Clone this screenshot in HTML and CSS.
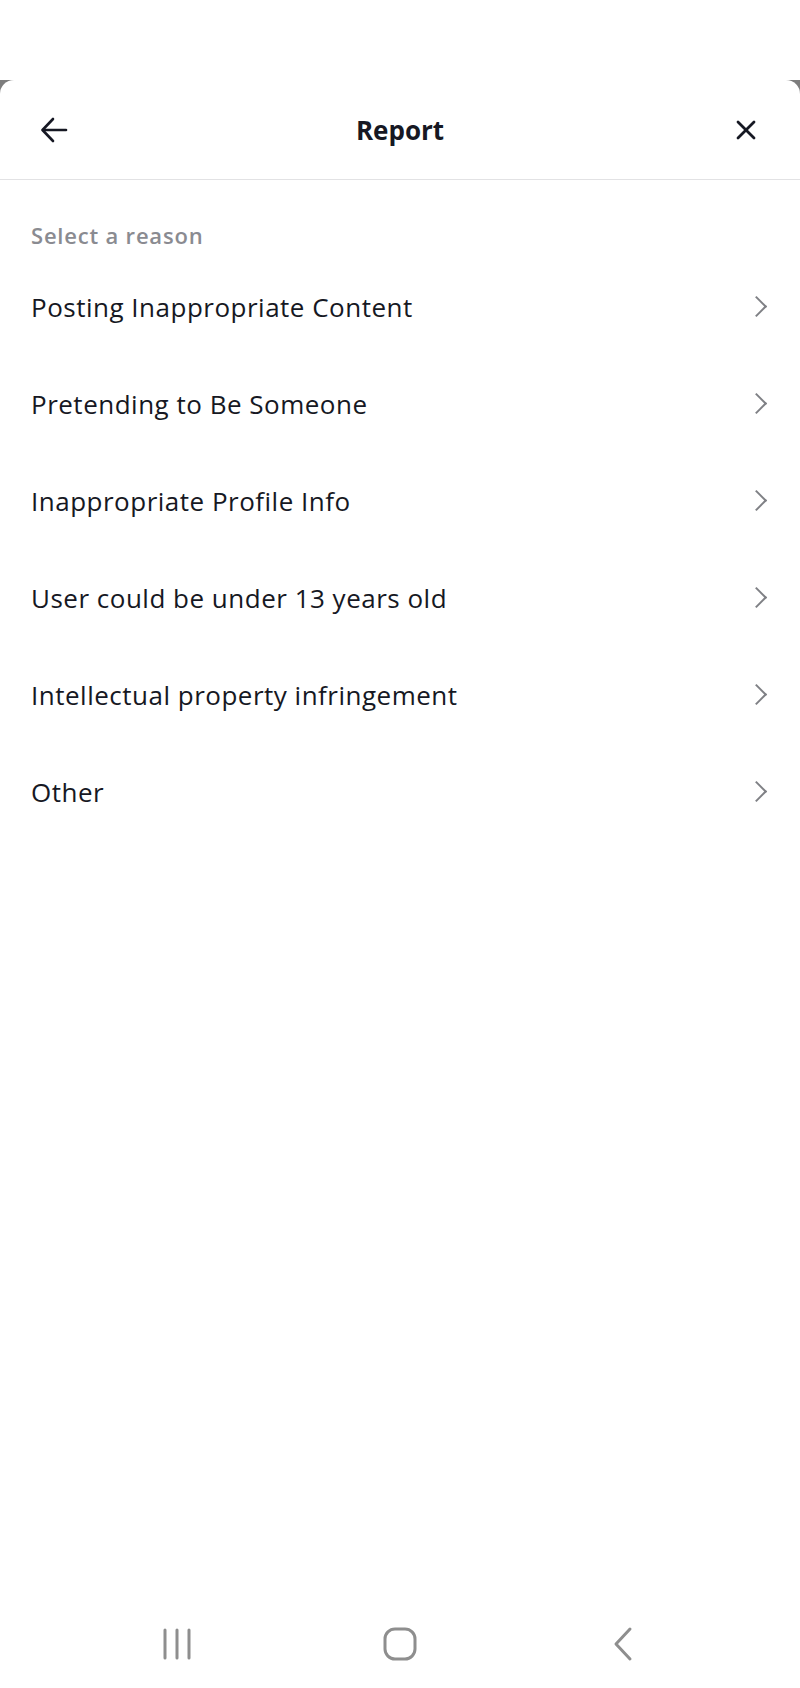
FILE: index.html
```html
<!DOCTYPE html>
<html lang="en">
<head>
    <meta charset="UTF-8">
    <meta name="viewport" content="width=device-width, initial-scale=1.0">
    <title>Report</title>
    <link rel="stylesheet" href="styles.css">
</head>
<body>
    <div class="top-space"></div>
    <div class="backdrop">
        <div class="sheet">
            <header class="sheet-header">
                <button class="icon-btn" aria-label="Back">
                    <svg width="30" height="30" viewBox="0 0 30 30" fill="none" stroke="#161823" stroke-width="2.6" stroke-linecap="round" stroke-linejoin="round">
                        <path d="M27 15H4"/>
                        <path d="M14 4L3.5 15 14 26"/>
                    </svg>
                </button>
                <h1 class="title">Report</h1>
                <button class="icon-btn" aria-label="Close">
                    <svg width="22" height="22" viewBox="0 0 22 22" fill="none" stroke="#161823" stroke-width="2.8" stroke-linecap="round">
                        <path d="M3 3l16 16"/>
                        <path d="M19 3L3 19"/>
                    </svg>
                </button>
            </header>

            <main class="content">
                <div class="label">Select a reason</div>
                <ul class="reasons">
                    <li class="reason"><span>Posting Inappropriate Content</span><i class="chev"></i></li>
                    <li class="reason"><span>Pretending to Be Someone</span><i class="chev"></i></li>
                    <li class="reason"><span>Inappropriate Profile Info</span><i class="chev"></i></li>
                    <li class="reason"><span>User could be under 13 years old</span><i class="chev"></i></li>
                    <li class="reason"><span>Intellectual property infringement</span><i class="chev"></i></li>
                    <li class="reason"><span>Other</span><i class="chev"></i></li>
                </ul>
            </main>

            <nav class="navbar">
                <span class="nav-cell">
                    <svg width="32" height="34" viewBox="0 0 32 34" fill="none" stroke="#8e8e8e" stroke-width="3" stroke-linecap="round">
                        <path d="M4 3v28M16 3v28M28 3v28"/>
                    </svg>
                </span>
                <span class="nav-cell">
                    <svg width="34" height="34" viewBox="0 0 34 34" fill="none" stroke="#8e8e8e" stroke-width="3">
                        <rect x="2" y="2" width="30" height="30" rx="10"/>
                    </svg>
                </span>
                <span class="nav-cell">
                    <svg width="22" height="36" viewBox="0 0 22 36" fill="none" stroke="#8e8e8e" stroke-width="3" stroke-linecap="round" stroke-linejoin="round">
                        <path d="M18 3L4 18l14 15"/>
                    </svg>
                </span>
            </nav>
        </div>
    </div>
</body>
</html>
```

FILE: styles.css
```css
* {
    box-sizing: border-box;
}
html, body {
    margin: 0;
    padding: 0;
}
body {
    width: 800px;
    height: 1688px;
    display: flex;
    flex-direction: column;
    font-family: "Open Sans", "Liberation Sans", sans-serif;
    color: #161823;
    background: #fff;
}
.top-space {
    height: 80px;
    background: #fff;
}
.backdrop {
    flex: 1;
    display: flex;
    background: #7d7d7d;
}
.sheet {
    flex: 1;
    display: flex;
    flex-direction: column;
    background: #fff;
    border-radius: 14px 14px 0 0;
}
.sheet-header {
    height: 100px;
    display: flex;
    align-items: center;
    justify-content: space-between;
    padding: 0 38px 0 38px;
    border-bottom: 1px solid #e2e2e4;
}
.icon-btn {
    background: none;
    border: none;
    padding: 0;
    width: 32px;
    height: 32px;
    display: flex;
    align-items: center;
    justify-content: center;
}
.title {
    margin: 0;
    font-size: 26px;
    font-weight: 700;
}
.content {
    flex: 1;
    padding-top: 40px;
}
.label {
    padding-left: 31px;
    height: 30px;
    line-height: 30px;
    margin-bottom: 8px;
    font-size: 22px;
    font-weight: 600;
    letter-spacing: 0.8px;
    color: #8a8b91;
}
.reasons {
    list-style: none;
    margin: 0;
    padding: 0;
}
.reason {
    height: 97px;
    display: flex;
    align-items: center;
    justify-content: space-between;
    padding: 0 36px 0 31px;
    font-size: 26px;
    letter-spacing: 0.5px;
}
.chev {
    width: 15px;
    height: 15px;
    border-top: 2.6px solid #7f8085;
    border-right: 2.6px solid #7f8085;
    transform: rotate(45deg);
}
.navbar {
    height: 88px;
    display: flex;
    align-items: center;
    justify-content: center;
    gap: 163px;
}
.nav-cell {
    width: 60px;
    display: flex;
    justify-content: center;
}
```
